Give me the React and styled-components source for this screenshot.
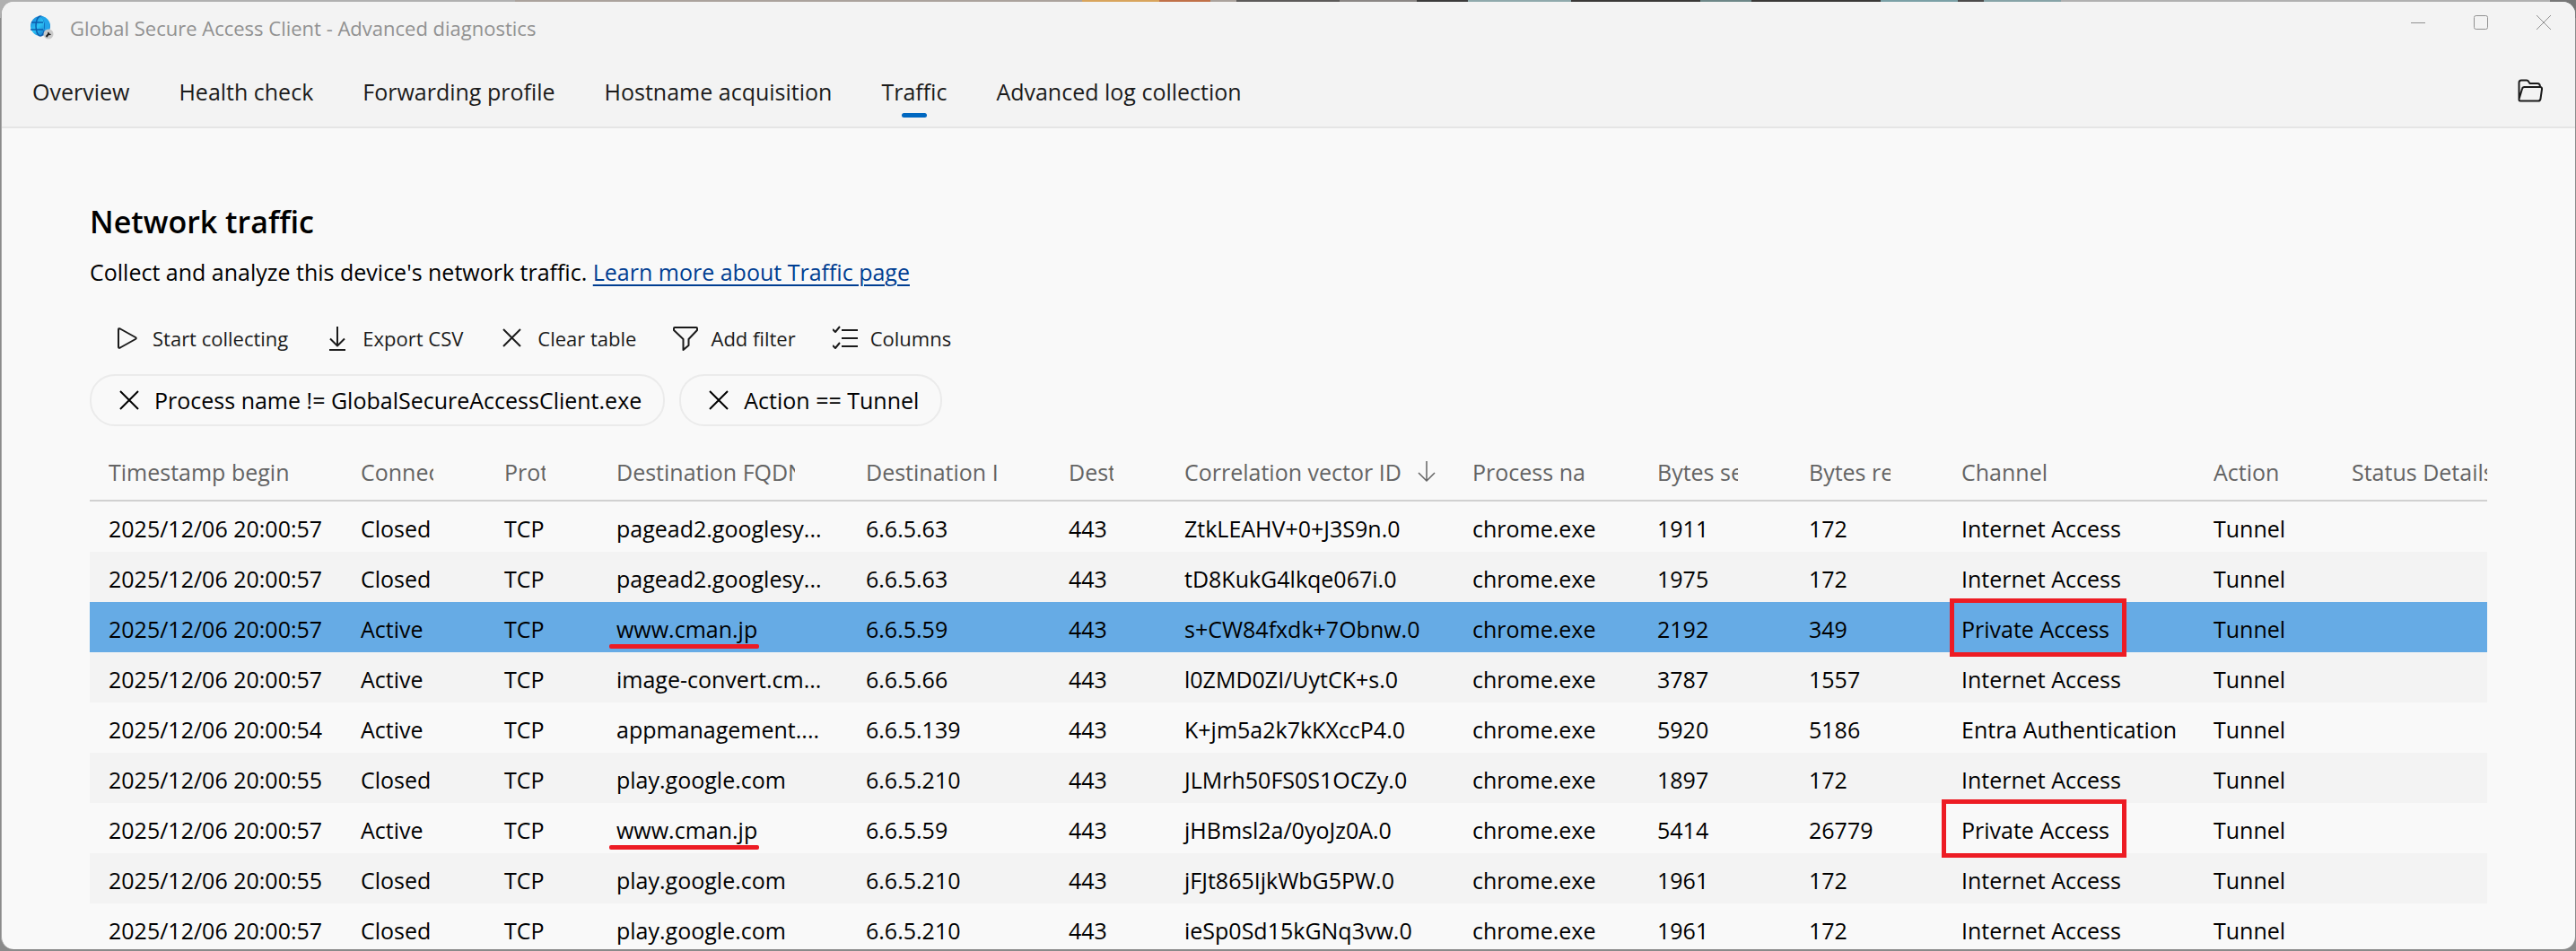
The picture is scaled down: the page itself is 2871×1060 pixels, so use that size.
import React, { useState } from "react";
import styled, { createGlobalStyle } from "styled-components";

const GlobalStyle = createGlobalStyle`
  * {
    box-sizing: border-box;
  }
  body {
    margin: 0;
    font-family: "Open Sans", "Noto Sans", sans-serif;
    color: #000;
  }
  button {
    font-family: inherit;
    color: inherit;
    background: none;
    border: none;
    padding: 0;
    margin: 0;
    cursor: pointer;
  }
`;

const Desktop = styled.div`
  height: 100vh;
  padding: 2px 1px 2px 1px;
  background-color: #8a8a8a;
  background-image: linear-gradient(
    90deg,
    #b0b0b0 0 20%,
    #aaa29c 20% 42%,
    #d8a45c 42% 45%,
    #c07048 45% 47%,
    #aaa29c 47% 48%,
    #5c5a59 48% 52%,
    #8a8684 52% 55%,
    #3c3b3b 55% 57%,
    #8fa9ac 57% 61%,
    #3a3938 61% 66%,
    #6d8788 66% 68%,
    #3a3938 68% 73%,
    #7aa0a6 73% 76%,
    #4c4b4b 76% 77%,
    #86a3a7 77% 80%,
    #b0b0b0 80% 99%,
    #777 99%
  );
  background-size: 100% 20px;
  background-repeat: no-repeat;
`;

const Window = styled.div`
  display: flex;
  flex-direction: column;
  height: 100%;
  overflow: hidden;
  border-left: 1px solid #a6a6a6;
  border-radius: 14px;
  background-color: #f9f9f9;
`;

const TopArea = styled.header`
  flex: none;
  background-color: #f3f3f3;
  border-bottom: 2px solid #e5e5e5;
`;

const TitleBar = styled.div`
  display: flex;
  align-items: center;
  height: 58px;
  padding-left: 30px;
`;

const AppTitle = styled.span`
  flex: 1;
  margin-left: 18px;
  font-size: 22px;
  line-height: 28px;
  color: #919191;
`;

const WindowButtons = styled.div`
  display: flex;
  align-self: flex-start;
`;

const WindowButton = styled.button`
  display: flex;
  align-items: center;
  justify-content: center;
  width: 70px;
  height: 46px;
  color: #919191;
`;

const NavBar = styled.div`
  display: flex;
  align-items: center;
  justify-content: space-between;
  height: 81px;
  padding: 2px 36px 0 34px;
`;

const Tabs = styled.nav`
  display: flex;
  gap: 55px;
`;

const Tab = styled.button`
  position: relative;
  font-size: 25px;
  line-height: 32px;
  color: #1b1b1b;
  white-space: nowrap;

  &::after {
    content: "";
    display: ${(props) => (props.$active ? "block" : "none")};
    position: absolute;
    left: calc(50% - 14px);
    bottom: -13px;
    width: 28px;
    height: 5px;
    border-radius: 3px;
    background-color: #0067c0;
  }
`;

const IconButton = styled.button`
  display: flex;
  color: #1b1b1b;
`;

const Main = styled.main`
  flex: 1;
  min-height: 0;
  overflow: hidden;
  padding: 80px 98px 0;
`;

const Heading = styled.h1`
  margin: 0;
  font-size: 34px;
  font-weight: 600;
  line-height: 48px;
`;

const Intro = styled.p`
  margin: 16px 0 0;
  font-size: 25px;
  line-height: 32px;
`;

const LearnLink = styled.a`
  color: #003e92;
  text-decoration: underline;
  text-decoration-thickness: 2px;
  text-underline-offset: 4px;
`;

const Toolbar = styled.div`
  display: flex;
  align-items: center;
  gap: 41px;
  height: 56px;
  margin-top: 30px;
  padding-left: 28px;
`;

const ToolButton = styled.button`
  display: flex;
  align-items: center;
  gap: 14px;
  font-size: 22px;
  line-height: 32px;
  color: #1b1b1b;
  white-space: nowrap;
`;

const Chips = styled.div`
  display: flex;
  gap: 16px;
  margin-top: 12px;
`;

const Chip = styled.button`
  display: flex;
  align-items: center;
  gap: 14px;
  height: 58px;
  padding: 0 24px 0 28px;
  border: 2px solid #ebebeb;
  border-radius: 28px;
  font-size: 25px;
  line-height: 32px;
  white-space: nowrap;
`;

const Table = styled.table`
  width: 100%;
  margin-top: 20px;
  table-layout: fixed;
  border-collapse: separate;
  border-spacing: 0;
  font-size: 25px;
  line-height: 32px;
`;

const HeaderCell = styled.th`
  height: 64px;
  padding: 0 ${(props) => (props.$sorted ? 16 : props.$last ? 0 : 58)}px 0 21px;
  border-bottom: 2px solid #d1d1d1;
  font-weight: 400;
  text-align: left;
  color: #646464;
`;

const HeaderLabel = styled.div`
  display: flex;
  align-items: center;
  justify-content: space-between;
  overflow: hidden;
  white-space: nowrap;
`;

const Row = styled.tr`
  background-color: ${(props) => (props.$selected ? "#66abe5" : "#f9f9f9")};

  &:nth-child(even) {
    background-color: #f3f3f3;
  }
`;

const Cell = styled.td`
  position: relative;
  height: 56px;
  padding: 3px 0 0 21px;
  white-space: nowrap;
`;

const Underline = styled.span`
  position: absolute;
  left: 13px;
  bottom: 4px;
  width: 167px;
  height: 5px;
  border-radius: 2px;
  background-color: #ed1c24;
`;

const Outline = styled.span`
  position: absolute;
  z-index: 1;
  top: -4px;
  bottom: -5px;
  left: ${(props) => (props.$wide ? -1 : 8)}px;
  width: ${(props) => (props.$wide ? 206 : 197)}px;
  border: 5px solid #ed1c24;
`;

const tabs = [
  "Overview",
  "Health check",
  "Forwarding profile",
  "Hostname acquisition",
  "Traffic",
  "Advanced log collection",
];

const columns = [
  { key: "time", label: "Timestamp begin", width: 281 },
  { key: "state", label: "Connection status", width: 160 },
  { key: "protocol", label: "Protocol", width: 125 },
  { key: "fqdn", label: "Destination FQDN", width: 278 },
  { key: "ip", label: "Destination IP", width: 226 },
  { key: "port", label: "Destination port", width: 129 },
  { key: "vector", label: "Correlation vector ID", width: 321, sorted: true },
  { key: "process", label: "Process name", width: 206 },
  { key: "sent", label: "Bytes sent", width: 169 },
  { key: "received", label: "Bytes received", width: 170 },
  { key: "channel", label: "Channel", width: 281 },
  { key: "action", label: "Action", width: 154 },
  { key: "details", label: "Status Details", width: 172 },
];

const makeRow = (time, state, fqdn, ip, vector, sent, received, channel) => ({
  time: `2025/12/06 ${time}`,
  state,
  protocol: "TCP",
  fqdn,
  ip,
  port: "443",
  vector,
  process: "chrome.exe",
  sent,
  received,
  channel,
  action: "Tunnel",
  details: "",
});

const rows = [
  makeRow("20:00:57", "Closed", "pagead2.googlesy...", "6.6.5.63", "ZtkLEAHV+0+J3S9n.0", 1911, 172, "Internet Access"),
  makeRow("20:00:57", "Closed", "pagead2.googlesy...", "6.6.5.63", "tD8KukG4lkqe067i.0", 1975, 172, "Internet Access"),
  makeRow("20:00:57", "Active", "www.cman.jp", "6.6.5.59", "s+CW84fxdk+7Obnw.0", 2192, 349, "Private Access"),
  makeRow("20:00:57", "Active", "image-convert.cm...", "6.6.5.66", "l0ZMD0ZI/UytCK+s.0", 3787, 1557, "Internet Access"),
  makeRow("20:00:54", "Active", "appmanagement....", "6.6.5.139", "K+jm5a2k7kKXccP4.0", 5920, 5186, "Entra Authentication"),
  makeRow("20:00:55", "Closed", "play.google.com", "6.6.5.210", "JLMrh50FS0S1OCZy.0", 1897, 172, "Internet Access"),
  makeRow("20:00:57", "Active", "www.cman.jp", "6.6.5.59", "jHBmsl2a/0yoJz0A.0", 5414, 26779, "Private Access"),
  makeRow("20:00:55", "Closed", "play.google.com", "6.6.5.210", "jFJt865IjkWbG5PW.0", 1961, 172, "Internet Access"),
  makeRow("20:00:57", "Closed", "play.google.com", "6.6.5.210", "ieSp0Sd15kGNq3vw.0", 1961, 172, "Internet Access"),
];

const Icon = ({ size = 28, stroke = 2, children }) => (
  <svg
    width={size}
    height={size}
    viewBox="0 0 28 28"
    fill="none"
    stroke="currentColor"
    strokeWidth={stroke}
    strokeLinejoin="round"
    aria-hidden="true"
  >
    {children}
  </svg>
);

const CrossIcon = () => (
  <Icon>
    <path d="M4 4l20 20M24 4L4 24" />
  </Icon>
);

const AppIcon = () => (
  <svg width="28" height="28" viewBox="0 0 28 28" aria-hidden="true">
    <defs>
      <linearGradient id="globe" x1="0" y1="0" x2="1" y2="1">
        <stop offset="0" stopColor="#1578d3" />
        <stop offset="0.45" stopColor="#2cc3f4" />
        <stop offset="1" stopColor="#0a55b8" />
      </linearGradient>
    </defs>
    <circle cx="13" cy="12" r="11" fill="url(#globe)" />
    <g fill="none" stroke="#0b5cad" strokeWidth="1.5">
      <ellipse cx="13" cy="12" rx="5" ry="11" />
      <path d="M3 8h13M2 16h14" />
    </g>
    <path d="M13 1a11 11 0 0 1 8 18l-4-2c2-5 1-11-4-16z" fill="#22a4ea" />
    <circle cx="22" cy="21" r="5.500" fill="#c9c9c9" />
    <path d="M19.500 24l3-3.500" stroke="#222" strokeWidth="2" />
    <path d="M22 18.500a2 2 0 1 0 3 2.500l-1.500-.2-.7-1z" fill="#222" />
  </svg>
);

const toolButtons = [
  {
    label: "Start collecting",
    icon: <path d="M4 4.500v19q0 2 2 1l17-9.500q1.500-1 0-2L6 3.500q-2-1-2 1z" />,
  },
  {
    label: "Export CSV",
    icon: <path d="M14 1v21M6 14.500l8 8 8-8M5 27h18" />,
  },
  { label: "Clear table", icon: <path d="M4 4l19 19M23 4L4 23" /> },
  {
    label: "Add filter",
    icon: <path d="M2 2h24q1 0 1 1v2l-9.500 10v7l-6 5V15L1 5V3q0-1 1-1z" />,
  },
  {
    label: "Columns",
    icon: (
      <path d="M10 5h18M10 14h18M10 23h18M0 4l3 3 5-6M0 22l3 3 5-6" />
    ),
  },
];

const App = () => {
  const [activeTab, setActiveTab] = useState("Traffic");
  const [selected, setSelected] = useState(2);
  const [filters, setFilters] = useState([
    "Process name != GlobalSecureAccessClient.exe",
    "Action == Tunnel",
  ]);

  const removeFilter = (filter) => {
    setFilters(filters.filter((item) => item !== filter));
  };

  return (
    <>
      <GlobalStyle />
      <Desktop>
        <Window>
          <TopArea>
            <TitleBar>
              <AppIcon />
              <AppTitle>
                Global Secure Access Client - Advanced diagnostics
              </AppTitle>
              <WindowButtons>
                <WindowButton aria-label="Minimize">
                  <svg width="16" height="16" stroke="currentColor">
                    <path d="M0 8.500h16" />
                  </svg>
                </WindowButton>
                <WindowButton aria-label="Maximize">
                  <svg width="16" height="16" fill="none" stroke="currentColor">
                    <rect x="0.500" y="0.500" width="15" height="15" rx="2" />
                  </svg>
                </WindowButton>
                <WindowButton aria-label="Close">
                  <svg width="16" height="16" stroke="currentColor">
                    <path d="M0 0l16 16M16 0L0 16" />
                  </svg>
                </WindowButton>
              </WindowButtons>
            </TitleBar>
            <NavBar>
              <Tabs>
                {tabs.map((tab) => (
                  <Tab
                    key={tab}
                    $active={tab === activeTab}
                    onClick={() => setActiveTab(tab)}
                  >
                    {tab}
                  </Tab>
                ))}
              </Tabs>
              <IconButton aria-label="Open log folder">
                <Icon>
                  <path d="M1.500 23V4q0-2.500 2.500-2.500h6q1.500 0 2.200 1.500l1.300 2H22q3 0 3 4M1.500 22.500L5 11q.5-2 2.500-2H25q2.300 0 2 2.500l-1.500 10.500q-.4 2.500-2.500 2.500H3q-1.500 0-1.500-1.500z" />
                </Icon>
              </IconButton>
            </NavBar>
          </TopArea>

          <Main>
            <Heading>Network traffic</Heading>
            <Intro>
              Collect and analyze this device's network traffic.{" "}
              <LearnLink href="#traffic">
                Learn more about Traffic page
              </LearnLink>
            </Intro>

            <Toolbar>
              {toolButtons.map((button) => (
                <ToolButton key={button.label}>
                  <Icon>{button.icon}</Icon>
                  {button.label}
                </ToolButton>
              ))}
            </Toolbar>

            <Chips>
              {filters.map((filter) => (
                <Chip key={filter} onClick={() => removeFilter(filter)}>
                  <CrossIcon />
                  {filter}
                </Chip>
              ))}
            </Chips>

            <Table>
              <colgroup>
                {columns.map((column) => (
                  <col key={column.key} width={column.width} />
                ))}
              </colgroup>
              <thead>
                <tr>
                  {columns.map((column) => (
                    <HeaderCell
                      key={column.key}
                      $sorted={column.sorted}
                      $last={column.key === "details"}
                    >
                      <HeaderLabel>
                        {column.label}
                        {column.sorted && (
                          <Icon stroke={1.5}>
                            <path d="M14 2v22M5 15l9 9 9-9" />
                          </Icon>
                        )}
                      </HeaderLabel>
                    </HeaderCell>
                  ))}
                </tr>
              </thead>
              <tbody>
                {rows.map((row, index) => (
                  <Row
                    key={row.vector}
                    $selected={index === selected}
                    onClick={() => setSelected(index)}
                  >
                    {columns.map(({ key }) => (
                      <Cell key={key}>
                        {row[key]}
                        {key === "fqdn" && row.fqdn === "www.cman.jp" && (
                          <Underline />
                        )}
                        {key === "channel" &&
                          row.channel === "Private Access" && (
                            <Outline $wide={index !== 2} />
                          )}
                      </Cell>
                    ))}
                  </Row>
                ))}
              </tbody>
            </Table>
          </Main>
        </Window>
      </Desktop>
    </>
  );
};

export default App;
